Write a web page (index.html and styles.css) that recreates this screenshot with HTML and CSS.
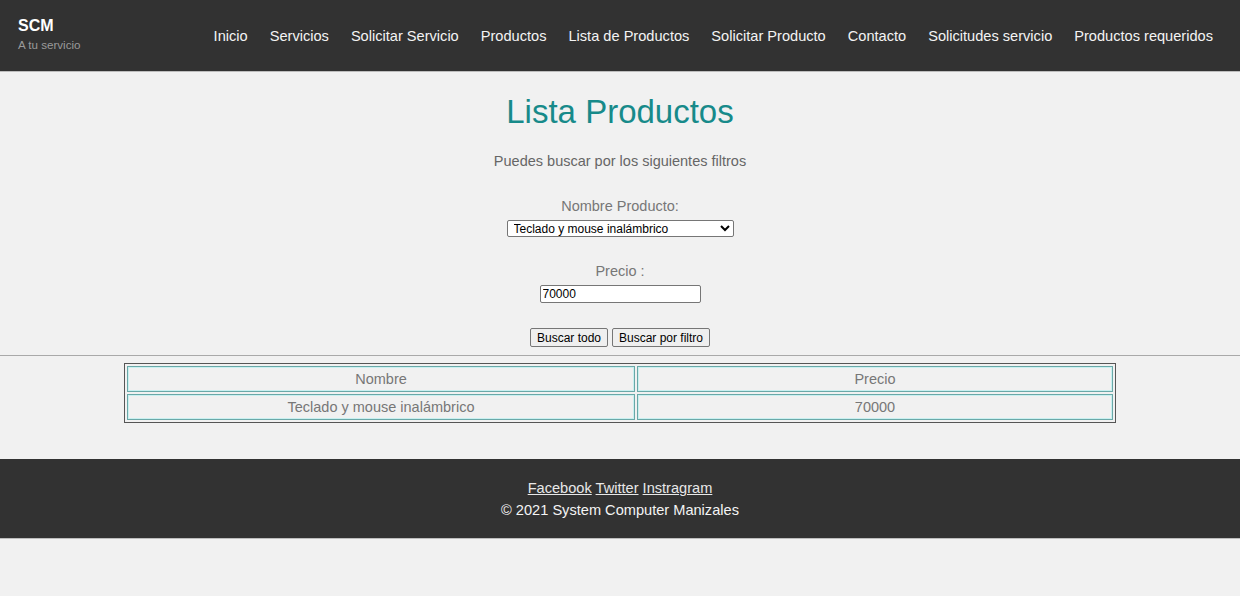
FILE: index.html
```html
<!DOCTYPE html>
<html lang="es">
<head>
<meta charset="utf-8">
<title>Lista Productos</title>
<link rel="stylesheet" href="styles.css">
</head>
<body>
<header class="topbar">
  <div class="brand">
    <div class="brand-name">SCM</div>
    <div class="brand-tag">A tu servicio</div>
  </div>
  <nav class="nav">
    <a href="#">Inicio</a>
    <a href="#">Servicios</a>
    <a href="#">Solicitar Servicio</a>
    <a href="#">Productos</a>
    <a href="#">Lista de Productos</a>
    <a href="#">Solicitar Producto</a>
    <a href="#">Contacto</a>
    <a href="#">Solicitudes servicio</a>
    <a href="#">Productos requeridos</a>
  </nav>
</header>
<main class="content">
  <h1 class="title">Lista Productos</h1>
  <p class="intro">Puedes buscar por los siguientes filtros</p>
  <form class="filters">
    <div class="field">
      <label class="label">Nombre Producto:</label>
      <select class="select"><option>Teclado y mouse inalámbrico</option></select>
    </div>
    <div class="field">
      <label class="label">Precio :</label>
      <input class="input" type="text" value="70000">
    </div>
    <div class="buttons">
      <button type="button" class="btn">Buscar todo</button>
      <button type="button" class="btn">Buscar por filtro</button>
    </div>
  </form>
  <hr class="rule">
  <table class="results">
    <tr><td class="col-name">Nombre</td><td>Precio</td></tr>
    <tr><td class="col-name">Teclado y mouse inalámbrico</td><td>70000</td></tr>
  </table>
</main>
<footer class="footer">
  <div class="links"><a href="#">Facebook</a> <a href="#">Twitter</a> <a href="#">Instragram</a></div>
  <div class="copy">© 2021 System Computer Manizales</div>
</footer>
</body>
</html>
```
FILE: styles.css
```css
html, body {
  margin: 0;
  padding: 0;
  background: #f1f1f1;
  font-family: "Liberation Sans", Arial, sans-serif;
}
.topbar {
  height: 72px;
  background: #323232;
  border-bottom: 1px solid #bdbdbd;
  display: flex;
  align-items: center;
  padding: 0 27px 0 18px;
  box-sizing: border-box;
}
.brand {
  display: flex;
  flex-direction: column;
  margin-top: -3px;
}
.brand-name {
  color: #fff;
  font-weight: bold;
  font-size: 16px;
  line-height: 18px;
}
.brand-tag {
  color: #9a9a9a;
  font-size: 11.6px;
  line-height: 14px;
  margin-top: 3px;
}
.nav {
  margin-left: auto;
  display: flex;
  gap: 22px;
}
.nav a {
  color: #f4f4f4;
  text-decoration: none;
  font-size: 14.6px;
}
.content {
  padding-top: 20px;
  padding-bottom: 36px;
}
.title {
  margin: 0;
  text-align: center;
  color: #178a8a;
  font-weight: normal;
  font-size: 33px;
  line-height: 40px;
}
.intro {
  margin: 21px 0 0;
  text-align: center;
  color: #666;
  font-size: 14.5px;
  line-height: 16px;
}
.filters {
  display: flex;
  flex-direction: column;
  align-items: center;
  margin-top: 28px;
}
.field {
  display: flex;
  flex-direction: column;
  align-items: center;
  margin-bottom: 25px;
}
.label {
  color: #777;
  font-size: 14.5px;
  line-height: 18px;
  margin-bottom: 5px;
}
.select {
  width: 227px;
  height: 17px;
  font-family: "Liberation Sans", Arial, sans-serif;
  font-size: 12px;
  padding: 0 2px;
  border: 1px solid #767676;
  border-radius: 2px;
  background: #fff;
  color: #000;
}
.input {
  width: 161px;
  height: 18px;
  box-sizing: border-box;
  font-family: "Liberation Sans", Arial, sans-serif;
  font-size: 12px;
  padding: 0 2px;
  border: 1px solid #767676;
  border-radius: 2px;
  background: #fff;
  color: #000;
}
.buttons {
  display: flex;
  gap: 4px;
}
.btn {
  height: 19px;
  font-family: "Liberation Sans", Arial, sans-serif;
  font-size: 12px;
  padding: 0 6px;
  border: 1px solid #767676;
  border-radius: 2px;
  background: #efefef;
  color: #000;
}
.rule {
  margin: 8px 0 0;
  border: 0;
  border-top: 1px solid #a9a9a9;
}
.results {
  width: 992px;
  margin: 7px auto 0;
  border: 1px solid #555;
  border-spacing: 2px;
  table-layout: fixed;
}
.results td {
  border: 1px solid #6aa8a8;
  box-shadow: inset 0 0 0 1px #c9f0f0;
  text-align: center;
  color: #777;
  font-size: 14.5px;
  height: 20px;
  padding: 2px;
}
.results .col-name {
  width: 502px;
}
.footer {
  background: #323232;
  border-bottom: 1px solid #bdbdbd;
  height: 80px;
  box-sizing: border-box;
  padding-top: 18px;
  text-align: center;
  font-size: 14.6px;
  line-height: 22px;
  color: #f4f4f4;
}
.footer a {
  color: #e8e8e8;
}
```
